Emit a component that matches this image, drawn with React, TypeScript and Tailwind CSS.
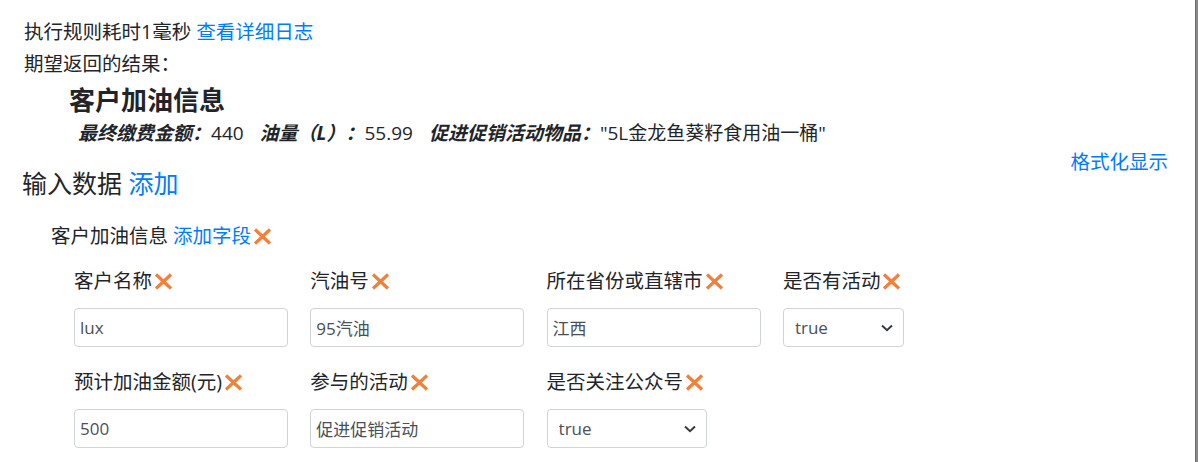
import React from "react";

const XIcon = () => (
  <svg width="22" height="17" viewBox="0 0 22 17" className="ml-[2px] shrink-0">
    <path d="M2 1.5 L17 15.5 M17 1.5 L2 15.5" stroke="#F0803A" strokeWidth="3.2" fill="none" />
  </svg>
);

const Chevron = () => (
  <svg width="12" height="8" viewBox="0 0 12 8" className="pointer-events-none absolute right-[11px] top-1/2 -translate-y-1/2">
    <path d="M1 1.5 L6 6.2 L11 1.5" stroke="#343a40" strokeWidth="2" fill="none" />
  </svg>
);

const Label = ({ text }: { text: string }) => (
  <div className="flex items-center leading-[30px] h-[30px] text-[19.5px] whitespace-nowrap">
    <span>{text}</span>
    <XIcon />
  </div>
);

const InputField = ({ label, value }: { label: string; value: string }) => (
  <div className="flex flex-col">
    <Label text={label} />
    <input
      defaultValue={value}
      className="mt-[12px] h-[39px] w-[214px] rounded-[4px] border border-[#ced4da] bg-white pl-[5px] text-[17px] text-[#495057] outline-none"
    />
  </div>
);

const SelectField = ({ label }: { label: string }) => (
  <div className="flex flex-col">
    <Label text={label} />
    <div className="relative mt-[12px] w-0 min-w-full">
      <select
        defaultValue="true"
        className="h-[39px] w-full appearance-none rounded-[4px] border border-[#ced4da] bg-white pl-[11px] text-[17px] text-[#495057] outline-none"
      >
        <option value="true">true</option>
        <option value="false">false</option>
      </select>
      <Chevron />
    </div>
  </div>
);

export default function App() {
  return (
    <div className="flex h-[462px] w-[1198px] overflow-hidden bg-white text-[#212529] font-['Open_Sans','Noto_Sans_CJK_SC',sans-serif]">
      <div className="min-w-0 flex-1 pl-[24px] pr-[27px] pt-[16px]">
        <div className="text-[19.5px] leading-[32px] whitespace-nowrap">
          执行规则耗时1毫秒 <a className="text-[#007bff]">查看详细日志</a>
        </div>
        <div className="text-[19.5px] leading-[32px]">期望返回的结果：</div>
        <div className="ml-[45px] text-[26px] font-bold leading-[40px]">客户加油信息</div>
        <div className="ml-[54px] flex text-[19px] leading-[26px] whitespace-nowrap">
          <span className="font-bold italic">最终缴费金额：</span>
          <span>440</span>
          <span className="ml-[16px] font-bold italic">油量（L）：</span>
          <span>55.99</span>
          <span className="ml-[16px] font-bold italic">促进促销活动物品：</span>
          <span>"5L金龙鱼葵籽食用油一桶"</span>
        </div>
        <div className="flex items-start justify-between">
          <div className="-ml-[2px] mt-[20px] text-[25px] leading-[34px]">
            输入数据 <a className="text-[#007bff]">添加</a>
          </div>
          <a className="text-[19.5px] leading-[32px] text-[#007bff]">格式化显示</a>
        </div>
        <div className="ml-[27px] mt-[20px] flex items-center text-[19.5px] leading-[32px]">
          <span>客户加油信息&nbsp;</span>
          <a className="text-[#007bff]">添加字段</a>
          <XIcon />
        </div>
        <div className="ml-[50px] mt-[14px] flex flex-col gap-[20px]">
          <div className="flex gap-[22.3px]">
            <InputField label="客户名称" value="lux" />
            <InputField label="汽油号" value="95汽油" />
            <InputField label="所在省份或直辖市" value="江西" />
            <SelectField label="是否有活动" />
          </div>
          <div className="flex gap-[22.3px]">
            <InputField label="预计加油金额(元)" value="500" />
            <InputField label="参与的活动" value="促进促销活动" />
            <SelectField label="是否关注公众号" />
          </div>
        </div>
      </div>
      <div className="w-[3px] shrink-0 border-l border-[#6e6e6e] bg-[#8a8a8a]" />
    </div>
  );
}
